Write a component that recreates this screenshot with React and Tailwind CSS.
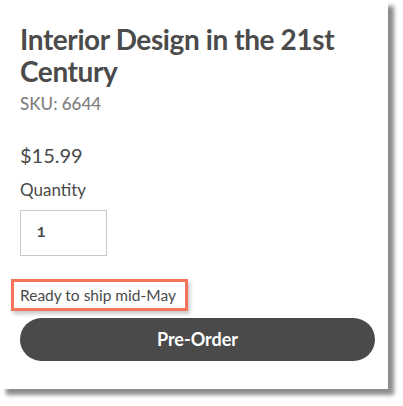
export default function App() {
  return (
    <div className="w-[403px] h-[406px] bg-white overflow-hidden">
      <div
        className="w-[388px] h-[389px] bg-white shadow-[6px_6px_4px_rgba(0,0,0,0.45)] pl-[20px] pr-[14px] pt-[23px] flex flex-col items-start text-[#4a4a4a]"
        style={{ fontFamily: 'Lato, "Open Sans", sans-serif' }}
      >
        <h1 className="text-[28px] leading-[32px] font-bold tracking-[-0.4px] text-[#4b4b4b]">
          Interior Design in the 21st Century
        </h1>
        <div className="mt-[7px] text-[17px] leading-[20px] font-medium text-[#7f7f7f]">
          SKU: 6644
        </div>
        <div className="mt-[29px] text-[20px] leading-[24px]">$15.99</div>
        <div className="mt-[13px] text-[17px] leading-[20px]">Quantity</div>
        <div className="mt-[10px] w-[87px] h-[46px] border border-[#c8c8c8] flex items-center pl-[16px]">
          <span
            className="text-[14px] font-bold text-[#4a4a4a]"
            style={{ fontFamily: '"Liberation Mono", monospace' }}
          >
            1
          </span>
        </div>
        <div className="mt-[23px] -ml-[9px] border-[3px] border-[#f4735c] pl-[6px] pr-[9px] h-[32px] flex items-center shadow-[2px_3px_4px_rgba(0,0,0,0.22)]">
          <span className="text-[15.5px] leading-[26px] whitespace-nowrap">Ready to ship mid-May</span>
        </div>
        <button className="mt-[7px] w-[355px] h-[43px] rounded-full bg-[#4a4a4a] text-white text-[18px] font-bold flex items-center justify-center">
          Pre-Order
        </button>
      </div>
    </div>
  );
}
